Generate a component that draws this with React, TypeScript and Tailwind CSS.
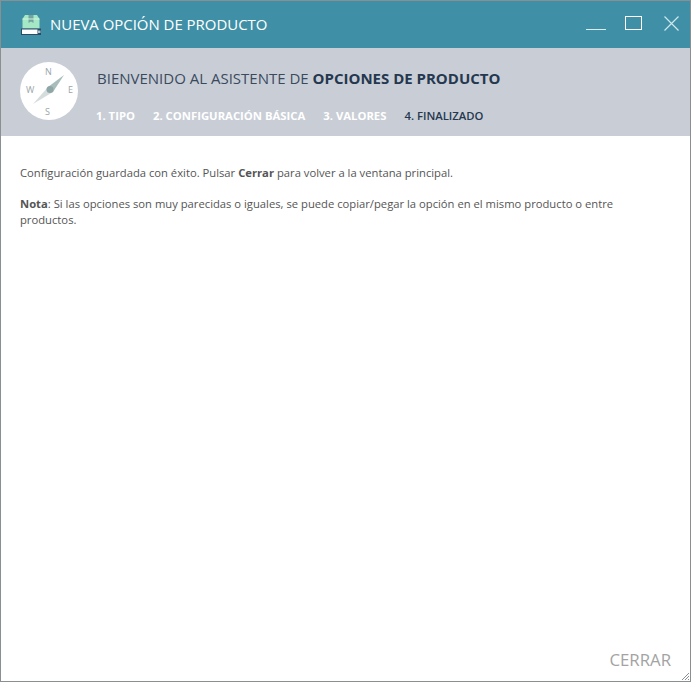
const font = { fontFamily: '"Open Sans", sans-serif' };

function BoxIcon() {
  return (
    <svg width="22" height="22" viewBox="0 0 22 22" className="shrink-0">
      <path d="M5 1h12l2.5 4v9.5h-17V5z" fill="#a5e8c6" />
      <path d="M8.5 1h5v8l-2.5-1.5L8.5 9z" fill="#72a5a0" />
      <path d="M2.5 5h17" stroke="#d4f3e1" strokeWidth="1" />
      <rect x="1" y="14.5" width="20" height="6.5" fill="#2c4a63" />
      <rect x="2" y="15.5" width="15.5" height="4.5" fill="#ffffff" />
      <rect x="18" y="16.5" width="2.5" height="2.5" fill="#a8c4d0" />
    </svg>
  );
}

function Compass() {
  return (
    <div className="relative w-[58px] h-[58px] rounded-full bg-white shrink-0">
      <span className="absolute left-[25px] top-[4px] text-[9px] leading-[12px] text-[#9aa5a8]">N</span>
      <span className="absolute left-[25px] bottom-[2px] text-[9px] leading-[12px] text-[#9aa5a8]">S</span>
      <span className="absolute left-[6px] top-[22px] text-[9px] leading-[12px] text-[#9aa5a8]">W</span>
      <span className="absolute right-[5px] top-[22px] text-[9px] leading-[12px] text-[#9aa5a8]">E</span>
      <svg width="58" height="58" viewBox="0 0 58 58" className="absolute left-0 top-0">
        <path d="M44 13 L33 30 L28 25 Z" fill="#a9bcbc" />
        <path d="M13 42 L28 25 L33 30 Z" fill="#d5dddc" />
        <circle cx="30" cy="27.5" r="3.5" fill="#8fa6a6" />
      </svg>
    </div>
  );
}

export default function App() {
  return (
    <div className="w-[691px] h-[684px] bg-white" style={font}>
      <div className="h-[682px] flex flex-col border border-[#8a8f92] relative overflow-hidden">
        <div className="h-[47px] bg-[#3f90a6] flex items-center pl-[19px] pr-[11px] shrink-0">
          <BoxIcon />
          <span className="ml-2 text-[14.95px] text-white">NUEVA OPCIÓN DE PRODUCTO</span>
          <div className="ml-auto self-start mt-[15px] flex items-start">
            <div className="w-[20px] h-px mt-[13px] mr-[19px] bg-[#dcecf0]" />
            <div className="w-[17px] h-[14px] border border-white mr-[22px]" />
            <svg width="15" height="15" viewBox="0 0 15 15">
              <path d="M0.5 0.5l14 14M14.5 0.5l-14 14" stroke="#cfe6ec" strokeWidth="1.2" />
            </svg>
          </div>
        </div>

        <div className="h-[88px] bg-[#c9ced6] flex items-start pl-[19px] pt-[14px] shrink-0">
          <Compass />
          <div className="ml-[19px]">
            <div className="text-[15px] leading-[20px] mt-[6px] text-[#3a4a5e]">
              BIENVENIDO AL ASISTENTE DE <b className="font-bold text-[#25384f]">OPCIONES DE PRODUCTO</b>
            </div>
            <div className="flex gap-[18px] mt-[20px] -ml-px text-[11.3px] leading-[16px] font-bold">
              <span className="text-white">1. TIPO</span>
              <span className="text-white">2. CONFIGURACIÓN BÁSICA</span>
              <span className="text-white">3. VALORES</span>
              <span className="text-[#25384f] font-semibold">4. FINALIZADO</span>
            </div>
          </div>
        </div>

        <div className="flex-1 pl-[19px] pt-[29px] w-[665px] text-[11.24px] leading-[16px] text-[#555]">
          <p>
            Configuración guardada con éxito. Pulsar <b className="font-bold">Cerrar</b> para volver a la ventana principal.
          </p>
          <p className="mt-[15px]">
            <b className="font-bold">Nota</b>: Si las opciones son muy parecidas o iguales, se puede copiar/pegar la opción en el mismo producto o entre productos.
          </p>
        </div>

        <div className="flex justify-end pr-[19px] pb-[11px] text-[16.8px] leading-[20px] text-[#a3a3a3]">CERRAR</div>

        <svg width="10" height="10" viewBox="0 0 10 10" className="absolute right-0 bottom-0">
          <path d="M9 2L2 9M9 5L5 9M9 8L8 9" stroke="#8a8f92" strokeWidth="1" />
        </svg>
      </div>
    </div>
  );
}
